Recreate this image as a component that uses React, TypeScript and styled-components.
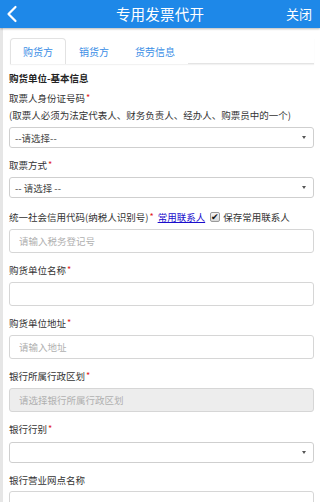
import React from "react";
import styled, { createGlobalStyle } from "styled-components";

const Global = createGlobalStyle`
  html, body { margin: 0; padding: 0; background: #fff; }
  body { font-family: "Noto Sans CJK SC", "Noto Sans", sans-serif; color: #333; }
  * { box-sizing: border-box; }
`;

const Page = styled.div`
  width: 320px;
  height: 502px;
  overflow: hidden;
  display: flex;
  flex-direction: column;
`;

const Header = styled.header`
  height: 28px;
  flex: none;
  background: #1e88e8;
  display: grid;
  grid-template-columns: 40px 1fr 40px;
  align-items: center;
  color: #fff;
  position: relative;
  z-index: 1;
  box-shadow: 0 1px 2px rgba(0, 0, 0, 0.28);
`;

const Back = styled.div`
  display: flex;
  align-items: center;
  padding-left: 6px;
`;

const Title = styled.div`
  text-align: center;
  font-size: 14.5px;
  line-height: 28px;
  letter-spacing: 0.2px;
`;

const Close = styled.div`
  text-align: right;
  padding-right: 8px;
  font-size: 13px;
  line-height: 28px;
  white-space: nowrap;
`;

const Body = styled.main`
  flex: 1;
  border-left: 3px solid #e6e6e6;
  padding: 10px 6px 0 6px;
`;

const Tabs = styled.div`
  display: flex;
  margin-left: 1px;
  height: 26px;
  border-bottom: 1px solid #e4e4e4;
  box-shadow: 0 1px 1px rgba(0, 0, 0, 0.05);
`;

const Tab = styled.div<{ $active?: boolean }>`
  padding: 0 12px;
  font-size: 10px;
  line-height: 25px;
  color: #3a8ee6;
  border: 1px solid ${(p) => (p.$active ? "#e2e2e2" : "transparent")};
  border-bottom: none;
  border-radius: 4px 4px 0 0;
  background: #fff;
  margin-bottom: -1px;
`;

const Heading = styled.div`
  margin-top: 6px;
  font-size: 9.5px;
  line-height: 16px;
  font-weight: bold;
  color: #222;
  margin-bottom: 3px;
`;

const Group = styled.div<{ $top?: number }>`
  margin-top: ${(p) => p.$top ?? 0}px;
  margin-bottom: 8px;
`;

const Label = styled.div<{ $gap?: number; $lh?: number }>`
  font-size: 9.5px;
  line-height: ${(p) => p.$lh ?? 18}px;
  color: #333;
  margin-bottom: ${(p) => p.$gap ?? 3}px;
  white-space: nowrap;
  display: flex;
  align-items: center;
`;

const Hint = styled.div`
  font-size: 9.5px;
  line-height: 16px;
  color: #333;
  margin-bottom: 4px;
  white-space: nowrap;
`;

const Req = styled.span`
  color: #e21b1b;
  font-size: 9px;
  margin-left: 1px;
`;

const Link = styled.a`
  color: #1a0dcc;
  text-decoration: underline;
  margin-left: 4px;
  cursor: pointer;
`;

const Check = styled.span`
  display: inline-flex;
  align-items: center;
  justify-content: center;
  width: 10px;
  height: 10px;
  margin: 0 3px 0 5px;
  border: 1px solid #9a9a9a;
  border-radius: 2px;
  background: linear-gradient(#f4f4f4, #d8d8d8);
  color: #111;
  font-size: 9px;
  line-height: 10px;
`;

const Select = styled.div`
  height: 21px;
  border: 1px solid #cfcfcf;
  border-radius: 3px;
  background: #fff;
  display: flex;
  align-items: center;
  justify-content: space-between;
  padding: 0 5px 0 5px;
  font-size: 9.5px;
  color: #444;
`;

const Arrow = styled.span`
  width: 0;
  height: 0;
  border-left: 2.5px solid transparent;
  border-right: 2.5px solid transparent;
  border-top: 3px solid #555;
  margin-right: 2px;
`;

const Input = styled.input<{ $disabled?: boolean }>`
  display: block;
  width: 100%;
  height: 24px;
  border: 1px solid #d6d6d6;
  border-radius: 3px;
  padding: 0 9px;
  font-family: inherit;
  font-size: 9.5px;
  color: #333;
  background: ${(p) => (p.$disabled ? "#ededed" : "#fff")};
  outline: none;
  &::placeholder {
    color: #b0b0b0;
  }
`;

const ChevronLeft = () => (
  <svg width="12" height="18" viewBox="0 0 12 18">
    <path d="M9.5 2 L2.5 9 L9.5 16" fill="none" stroke="#fff" strokeWidth="2.2" strokeLinecap="round" strokeLinejoin="round" />
  </svg>
);

export default function App() {
  return (
    <Page>
      <Global />
      <Header>
        <Back>
          <ChevronLeft />
        </Back>
        <Title>专用发票代开</Title>
        <Close>关闭</Close>
      </Header>
      <Body>
        <Tabs>
          <Tab $active>购货方</Tab>
          <Tab>销货方</Tab>
          <Tab>货劳信息</Tab>
        </Tabs>
        <Heading>购货单位-基本信息</Heading>
        <Group>
          <Label $gap={0}>
            取票人身份证号码<Req>*</Req>
          </Label>
          <Hint>(取票人必须为法定代表人、财务负责人、经办人、购票员中的一个)</Hint>
          <Select>
            <span>--请选择--</span>
            <Arrow />
          </Select>
        </Group>
        <Group>
          <Label>
            取票方式<Req>*</Req>
          </Label>
          <Select>
            <span>-- 请选择 --</span>
            <Arrow />
          </Select>
        </Group>
        <Group $top={4}>
          <Label $lh={22} $gap={1}>
            统一社会信用代码(纳税人识别号)<Req>*</Req>
            <Link>常用联系人</Link>
            <Check>✔</Check>
            保存常用联系人
          </Label>
          <Input placeholder="请输入税务登记号" />
        </Group>
        <Group>
          <Label>
            购货单位名称<Req>*</Req>
          </Label>
          <Input />
        </Group>
        <Group>
          <Label>
            购货单位地址<Req>*</Req>
          </Label>
          <Input placeholder="请输入地址" />
        </Group>
        <Group>
          <Label>
            银行所属行政区划<Req>*</Req>
          </Label>
          <Input $disabled disabled placeholder="请选择银行所属行政区划" />
        </Group>
        <Group>
          <Label $gap={4}>
            银行行别<Req>*</Req>
          </Label>
          <Select>
            <span />
            <Arrow />
          </Select>
        </Group>
        <Group>
          <Label $gap={2}>银行营业网点名称</Label>
          <Input />
        </Group>
      </Body>
    </Page>
  );
}
